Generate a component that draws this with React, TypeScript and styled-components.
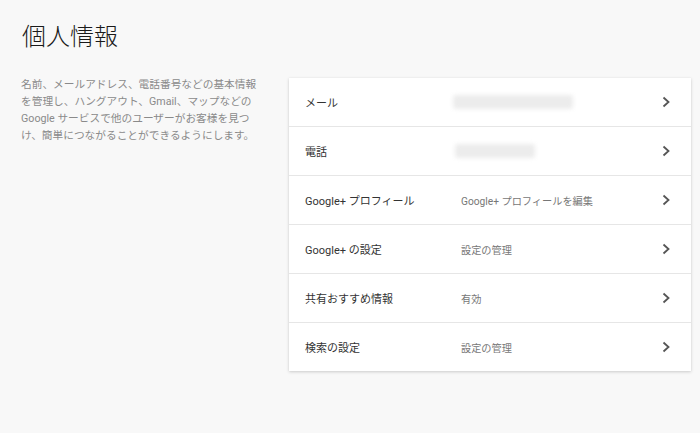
import { createGlobalStyle } from 'styled-components';
import styled from 'styled-components';

const GlobalStyle = createGlobalStyle`
  html, body {
    margin: 0;
    padding: 0;
    background: #f8f8f8;
    font-family: Roboto, "Noto Sans CJK JP", sans-serif;
  }
`;

const Page = styled.div`
  width: 700px;
  height: 433px;
  padding: 20px 9px 0 21px;
  box-sizing: border-box;
`;

const Title = styled.h1`
  margin: 0 0 0 1px;
  font-size: 24px;
  font-weight: 300;
  line-height: 34px;
  color: #1a1a1a;
`;

const Content = styled.div`
  display: flex;
  margin-top: 24px;
`;

const Description = styled.p`
  width: 268px;
  flex: none;
  margin: -2px 0 0;
  padding-right: 28px;
  box-sizing: border-box;
  font-size: 10.7px;
  line-height: 17px;
  color: #8a8a8a;
`;

const Card = styled.div`
  flex: 1;
  background: #fff;
  box-shadow: 0 1px 3px rgba(0, 0, 0, 0.18), 0 0 1px rgba(0, 0, 0, 0.06);
`;

const Row = styled.div`
  display: flex;
  align-items: center;
  height: 48px;
  padding: 0 18px 0 16px;
  border-top: 1px solid #e6e6e6;

  &:first-child {
    border-top: none;
  }
`;

const Label = styled.div`
  width: 156px;
  flex: none;
  font-size: 11px;
  color: #333;
`;

const Value = styled.div`
  flex: 1;
  font-size: 10.2px;
  color: #777;
`;

const Blurred = styled.div<{ $w: number; $dx: number }>`
  width: ${(p) => p.$w}px;
  height: 14px;
  margin-left: ${(p) => p.$dx}px;
  background: #ececec;
  border-radius: 3px;
  filter: blur(2px);
`;

const Chevron = styled.svg`
  width: 14px;
  height: 14px;
  flex: none;
`;

type Item = { label: string; value?: string; blur?: [number, number] };

const items: Item[] = [
  { label: 'メール', blur: [120, -8] },
  { label: '電話', blur: [80, -6] },
  { label: 'Google+ プロフィール', value: 'Google+ プロフィールを編集' },
  { label: 'Google+ の設定', value: '設定の管理' },
  { label: '共有おすすめ情報', value: '有効' },
  { label: '検索の設定', value: '設定の管理' },
];

export default function App() {
  return (
    <>
      <GlobalStyle />
      <Page>
        <Title>個人情報</Title>
        <Content>
          <Description>
            名前、メールアドレス、電話番号などの基本情報を管理し、ハングアウト、Gmail、マップなどの
            Google サービスで他のユーザーがお客様を見つけ、簡単につながることができるようにします。
          </Description>
          <Card>
            {items.map((it) => (
              <Row key={it.label}>
                <Label>{it.label}</Label>
                <Value>
                  {it.blur ? <Blurred $w={it.blur[0]} $dx={it.blur[1]} /> : it.value}
                </Value>
                <Chevron viewBox="0 0 14 14">
                  <path d="M4.5 2.5 L9.5 7 L4.5 11.5" fill="none" stroke="#555" strokeWidth="1.8" />
                </Chevron>
              </Row>
            ))}
          </Card>
        </Content>
      </Page>
    </>
  );
}
